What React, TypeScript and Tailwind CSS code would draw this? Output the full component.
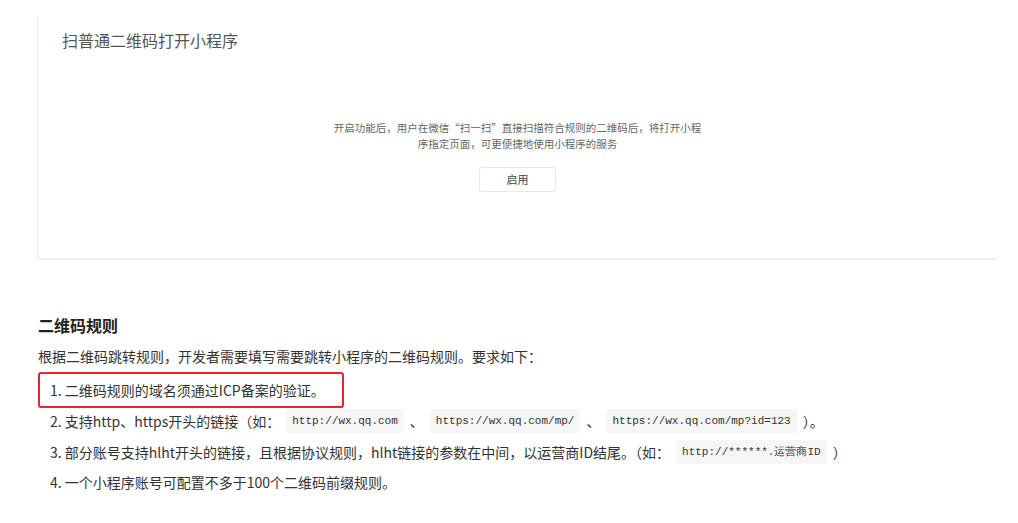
import React from "react";

const Code = ({ children }: { children: React.ReactNode }) => (
  <code className="mx-[6px] inline-block rounded-[3px] bg-[#f6f6f6] px-[6px] py-[2px] align-middle text-[11px] leading-[20px] text-[#333] [font-family:'Liberation_Mono','DejaVu_Sans_Mono',monospace]">
    {children}
  </code>
);

export default function App() {
  return (
    <div className="min-h-[523px] w-[1018px] bg-white text-[#333] [font-family:'Noto_Sans_CJK_SC','Liberation_Sans',sans-serif]">
      <div className="pl-[37px] pr-[21px] pt-[16px]">
        <div className="flex h-[244px] flex-col border-b-2 border-l border-[#efefef] rounded-bl-[3px]">
          <div className="pl-[24px] pt-[12px] text-[16px] leading-[24px] text-[#555]">扫普通二维码打开小程序</div>
          <div className="mt-[68px] flex flex-col items-center">
            <p className="whitespace-nowrap text-center text-[10.5px] leading-[16px] text-[#666]">
              开启功能后，用户在微信“扫一扫”直接扫描符合规则的二维码后，将打开小程
              <br />
              序指定页面，可更便捷地使用小程序的服务
            </p>
            <button className="mt-[15px] h-[25px] w-[77px] rounded-[3px] border border-[#e7e7e7] bg-white text-[11px] text-[#444]">
              启用
            </button>
          </div>
        </div>
      </div>

      <div className="pl-[38px] pt-[54px]">
        <h2 className="text-[16px] font-bold leading-[22px] text-[#222]">二维码规则</h2>
        <p className="mt-[9px] text-[14px] leading-[22px]">
          根据二维码跳转规则，开发者需要填写需要跳转小程序的二维码规则。要求如下：
        </p>
        <ol className="mt-[5px] text-[14px] leading-[22px]">
          <li className="flex h-[36px] w-[306px] items-center rounded-[3px] border-2 border-[#e8262a] pl-[10px]">
            1. 二维码规则的域名须通过ICP备案的验证。
          </li>
          <li className="flex h-[26px] items-center pl-[12px]">
            2. 支持http、https开头的链接（如：<Code>http://wx.qq.com</Code>、<Code>https://wx.qq.com/mp/</Code>、
            <Code>https://wx.qq.com/mp?id=123</Code>）。
          </li>
          <li className="mt-[5px] flex h-[26px] items-center pl-[12px]">
            3. 部分账号支持hlht开头的链接，且根据协议规则，hlht链接的参数在中间，以运营商ID结尾。（如：
            <Code>http://******.运营商ID</Code>）
          </li>
          <li className="mt-[4px] flex h-[26px] items-center pl-[12px]">4. 一个小程序账号可配置不多于100个二维码前缀规则。</li>
        </ol>
      </div>
    </div>
  );
}
